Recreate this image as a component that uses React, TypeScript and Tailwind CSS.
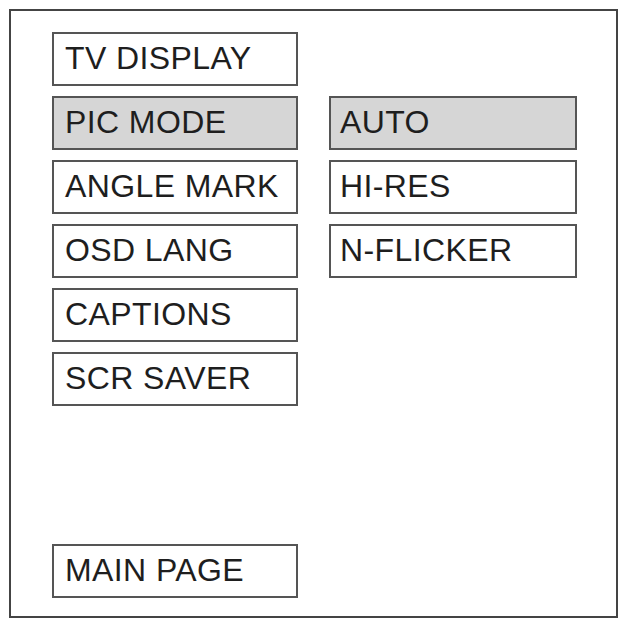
import React from "react";

function Box({ label, active = false, w, pl }: { label: string; active?: boolean; w: string; pl: string }) {
  return (
    <div
      className={`${w} ${pl} h-[54px] border-2 border-[#555] flex items-center pb-[2px] text-[32px] leading-none tracking-[0.4px] text-[#1e1e1e] ${
        active ? "bg-[#d6d6d6]" : "bg-white"
      }`}
      style={{ fontFamily: '"Liberation Sans", Arial, sans-serif' }}
    >
      {label}
    </div>
  );
}

export default function App() {
  const left = ["TV DISPLAY", "PIC MODE", "ANGLE MARK", "OSD LANG", "CAPTIONS", "SCR SAVER"];
  const right = ["AUTO", "HI-RES", "N-FLICKER"];
  return (
    <div className="w-[623px] h-[621px] bg-white pt-[9px] pl-[9px]">
      <div className="w-[609px] h-[609px] border-2 border-[#444] flex pl-[41px] pt-[21px] pb-[18px] gap-[31px]">
        <div className="flex flex-col gap-[10px] h-full">
          {left.map((l) => (
            <Box key={l} label={l} active={l === "PIC MODE"} w="w-[246px]" pl="pl-[11px]" />
          ))}
          <div className="mt-auto">
            <Box label="MAIN PAGE" w="w-[246px]" pl="pl-[11px]" />
          </div>
        </div>
        <div className="flex flex-col gap-[10px] pt-[64px]">
          {right.map((r) => (
            <Box key={r} label={r} active={r === "AUTO"} w="w-[248px]" pl="pl-[9px]" />
          ))}
        </div>
      </div>
    </div>
  );
}
